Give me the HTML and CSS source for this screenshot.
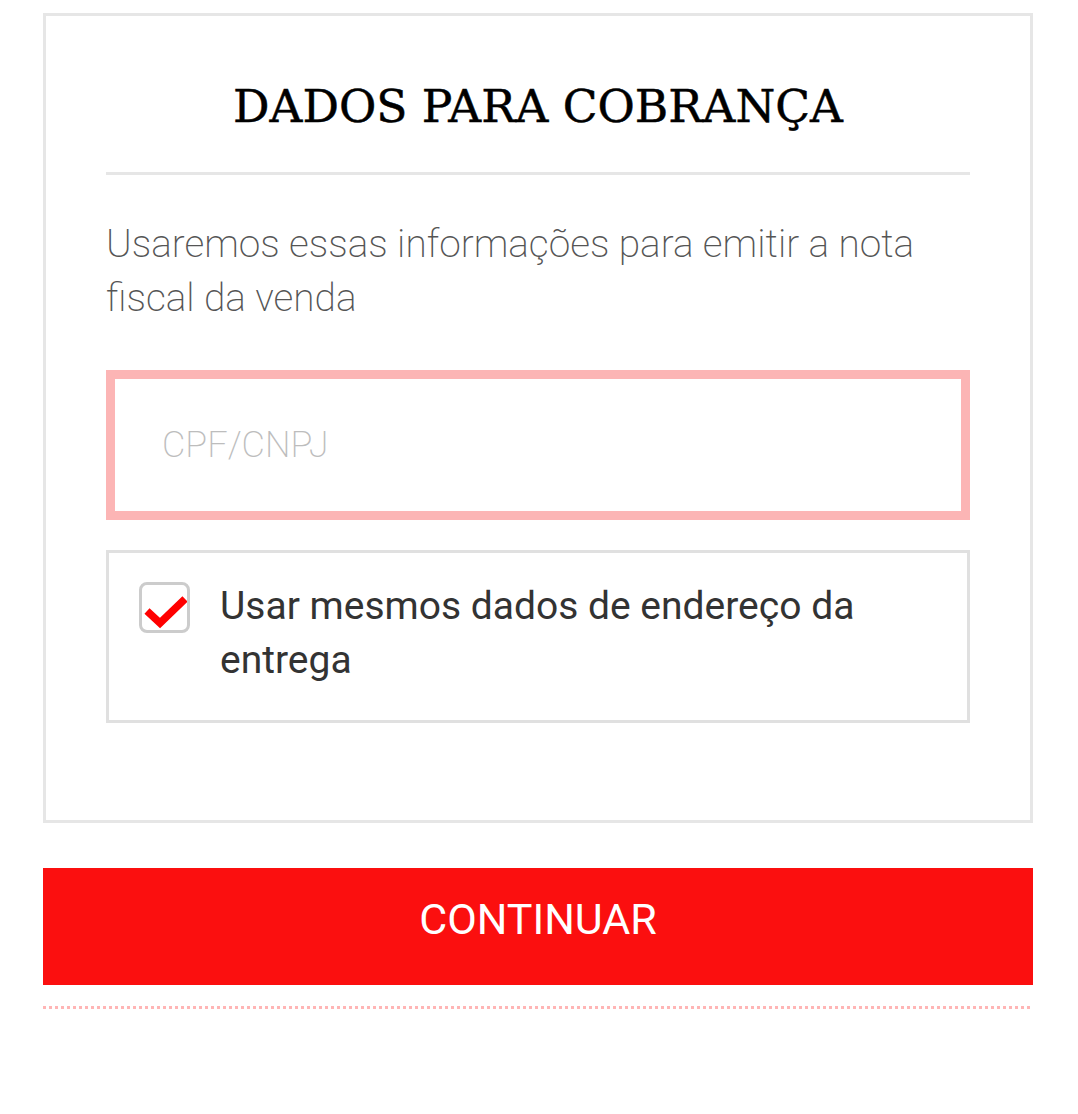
FILE: index.html
```html
<!DOCTYPE html>
<html lang="pt-BR">
<head>
  <meta charset="UTF-8">
  <title>Dados para cobrança</title>
  <link rel="stylesheet" href="styles.css">
</head>
<body>

  <div class="checkout">
    <div class="card">
      <h2 class="card-title">DADOS PARA COBRANÇA</h2>
      <p class="card-hint">Usaremos essas informações para emitir a nota fiscal da venda</p>

      <input class="doc-input" type="text" placeholder="CPF/CNPJ">

      <label class="same-address">
        <span class="check-box">
          <svg viewBox="0 0 45 45" width="45" height="45">
            <path d="M5 26 L18 38 L43 14" fill="none" stroke="#ff0000" stroke-width="7.5"/>
          </svg>
        </span>
        <span class="same-address-text">Usar mesmos dados de endereço da entrega</span>
      </label>
    </div>

    <button class="btn-continue">CONTINUAR</button>
    <div class="dots"></div>
  </div>

</body>
</html>
```

FILE: styles.css
```css
:root {
  --line: #e6e6e6;
  --red: #fb0f0f;
  --pink: #fcb5b5;
}

html, body {
  margin: 0;
  padding: 0;
  background: #fff;
  font-family: Roboto, "Liberation Sans", sans-serif;
}

.checkout {
  padding: 13px 45px 0 43px;
}

.card {
  border: 3px solid var(--line);
  padding: 63px 60px 97px;
}

.card-title {
  margin: 0;
  padding-bottom: 38px;
  border-bottom: 3px solid var(--line);
  font-family: "DejaVu Serif", "Liberation Serif", serif;
  font-weight: normal;
  font-size: 45.5px;
  line-height: 55px;
  color: #000;
  text-align: center;
  -webkit-text-stroke: 0.5px #000;
}

.card-hint {
  margin: 42px 0 0;
  font-weight: 200;
  font-size: 38.8px;
  line-height: 54px;
  color: #555;
}

.doc-input {
  display: block;
  box-sizing: border-box;
  width: 100%;
  height: 150px;
  margin-top: 45px;
  padding: 0 0 0 47px;
  border: 9px solid var(--pink);
  outline: none;
  font-family: Roboto, sans-serif;
  font-weight: 200;
  font-size: 36px;
  color: #333;
  background: #fff;
}

.doc-input::placeholder {
  color: #bdbdbd;
}

.same-address {
  display: flex;
  align-items: flex-start;
  gap: 30px;
  margin-top: 30px;
  padding: 26px 30px 33px;
  border: 3px solid #e0e0e0;
  cursor: pointer;
}

.check-box {
  flex: none;
  box-sizing: border-box;
  width: 51px;
  height: 51px;
  margin-top: 3px;
  border: 3px solid #ccc;
  border-radius: 8px;
  display: flex;
}

.same-address-text {
  font-size: 39px;
  line-height: 54px;
  color: #333;
}

.btn-continue {
  display: block;
  width: 100%;
  height: 117px;
  margin-top: 45px;
  padding: 0 0 14px;
  border: none;
  background: var(--red);
  color: #fff;
  font-family: Roboto, sans-serif;
  font-size: 43px;
  line-height: 103px;
  cursor: pointer;
}

.dots {
  height: 3px;
  margin-top: 21px;
  background: repeating-linear-gradient(90deg, #ffb5b5 0 3px, transparent 3px 6px);
}
```
